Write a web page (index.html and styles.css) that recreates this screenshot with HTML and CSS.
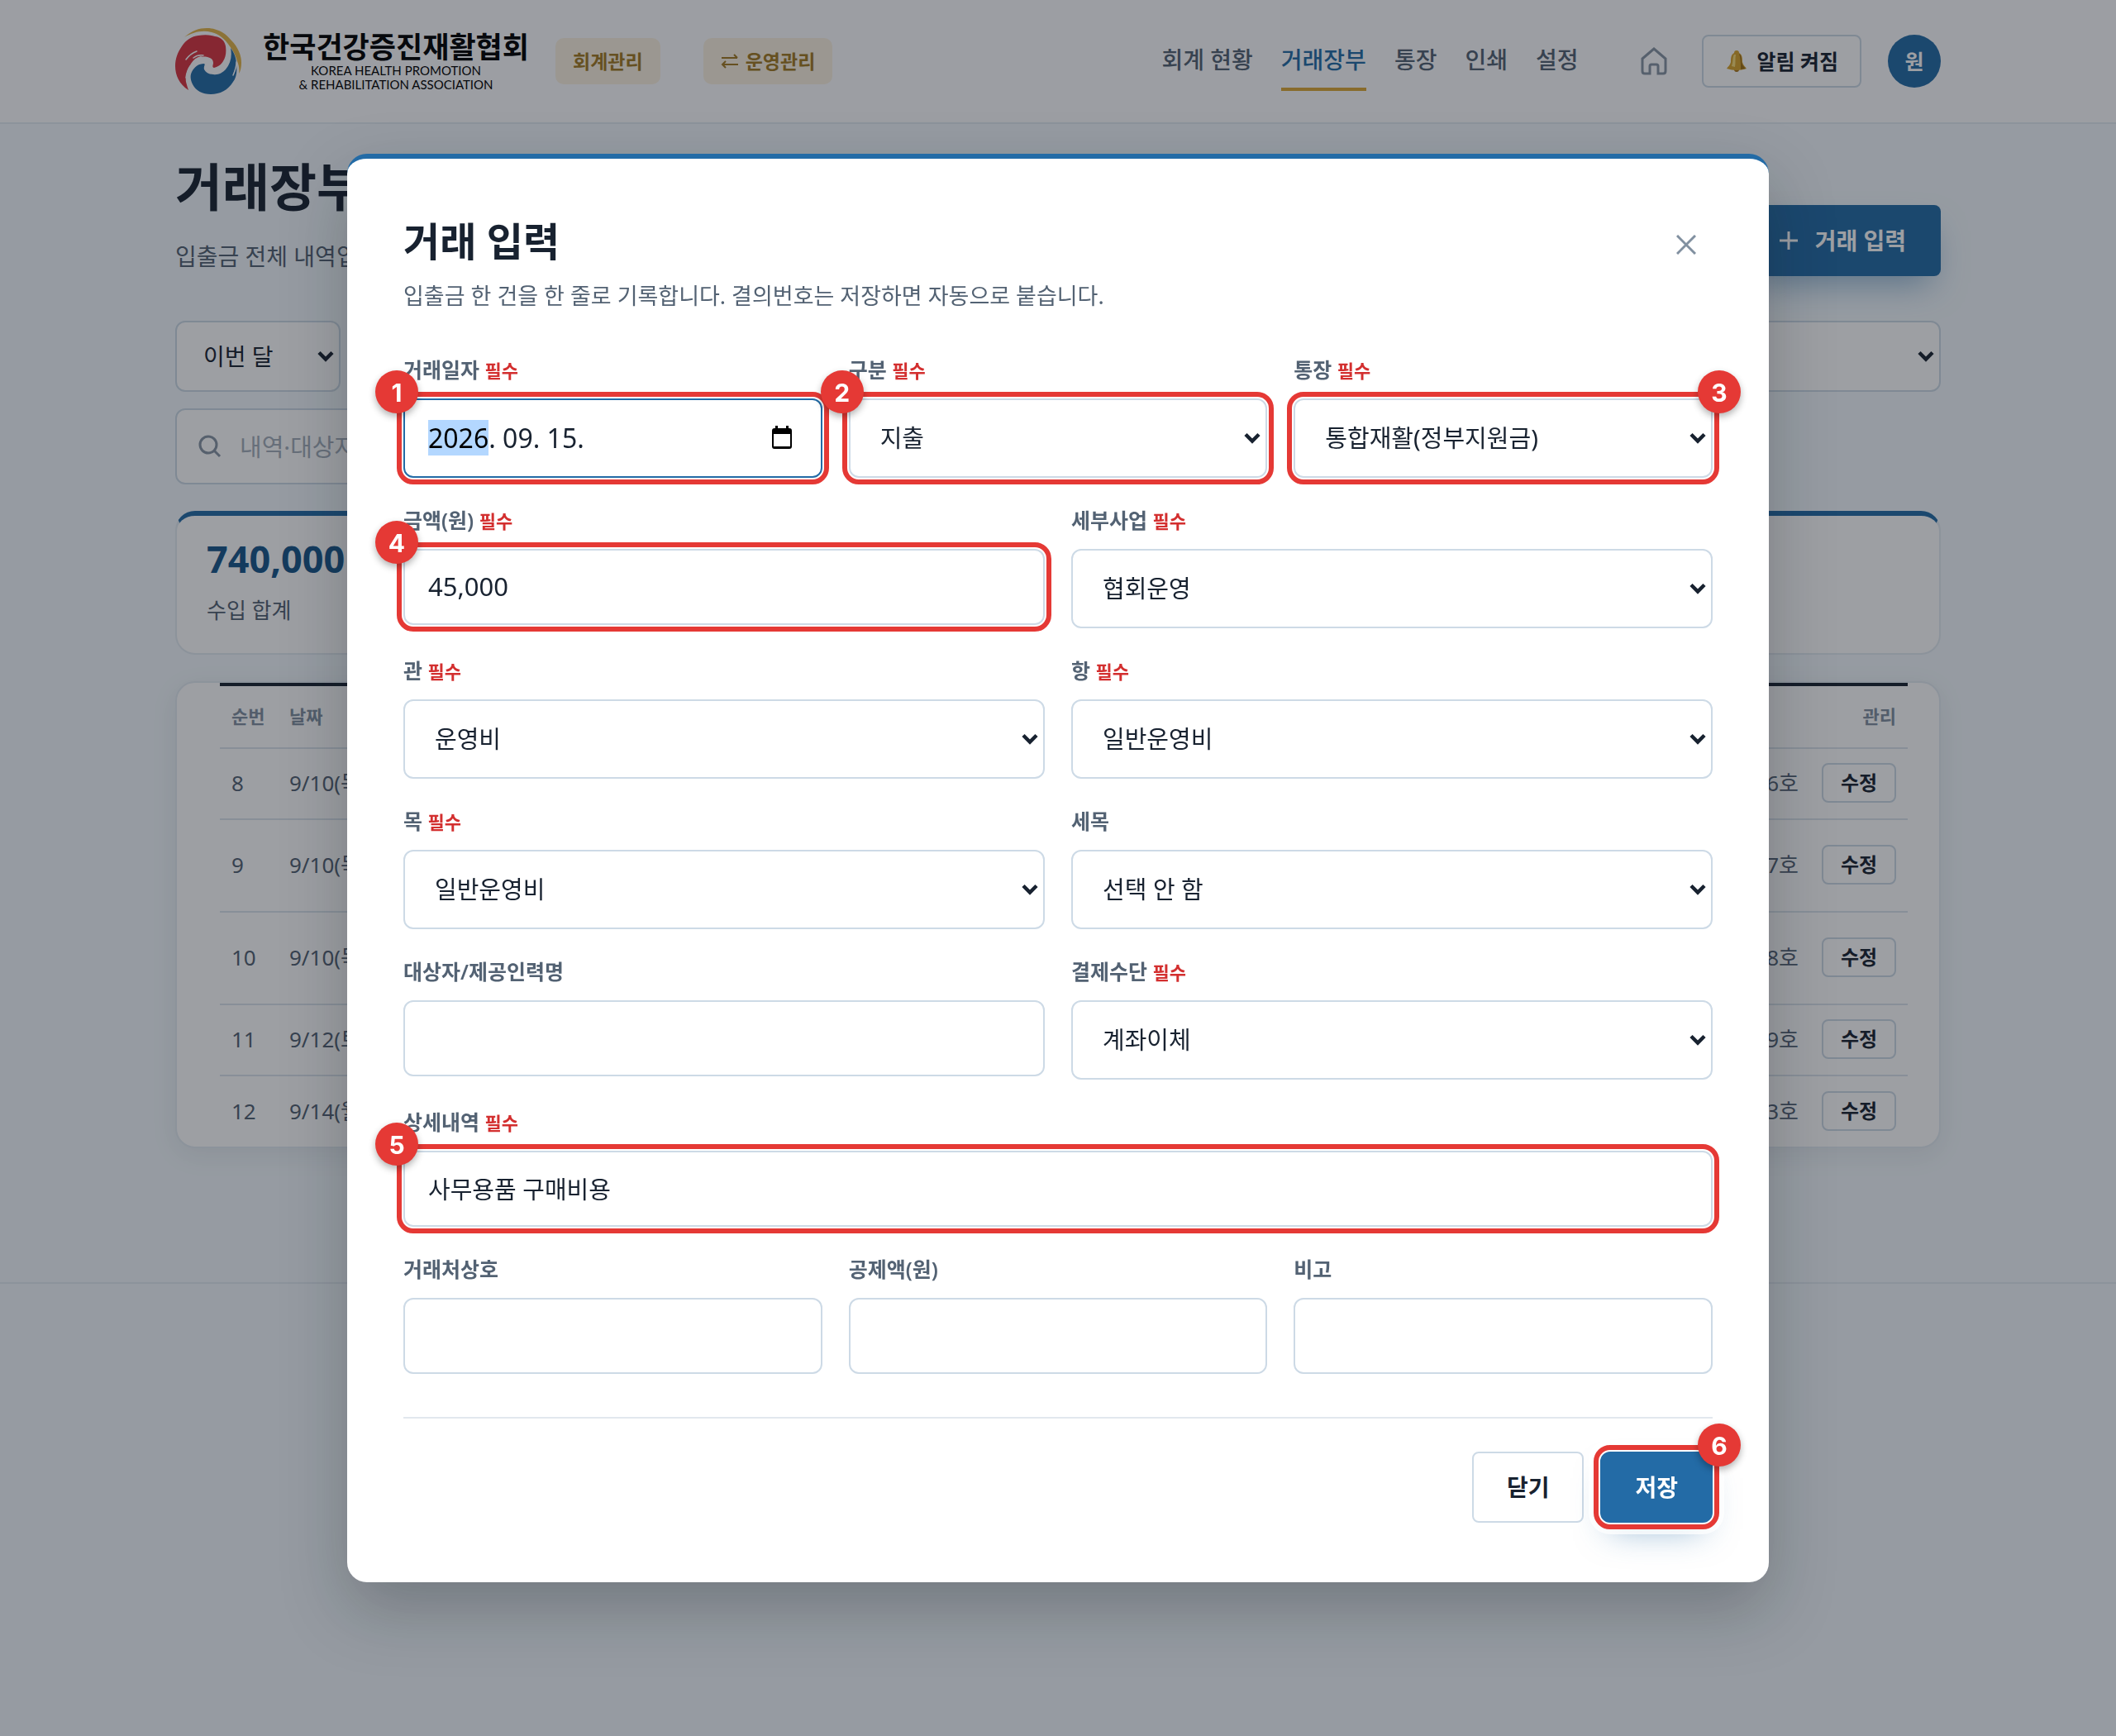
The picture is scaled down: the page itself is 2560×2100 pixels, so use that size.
FILE: index.html
```html
<!DOCTYPE html>
<html lang="ko">
<head>
  <meta charset="UTF-8">
  <title>거래장부 - 한국건강증진재활협회</title>
  <meta name="viewport" content="width=device-width, initial-scale=1.0">
  <link rel="stylesheet" href="styles.css">
</head>
<body>

<!-- Header -->
<header class="site-header">
  <div class="container header-inner">
    <a class="brand" href="#">
      <svg class="brand-mark" viewBox="0 0 80 80" aria-hidden="true">
        <path fill="#e3b448" d="M11 11C20 3 29 0 38 0C51 0 61 6 68 15C76 23 80 33 80 42C80 47 79 52 77 55C78 50 77 45 75 40C73 33 70 27 66 22C60 13 53 7 44 5C32 2 22 5 11 11Z"/>
        <path fill="#d8343f" d="M16 75C5 68 0 57 0 46C0 37 3 29 8 22C13 14 20 10 28 9C35 8 42 8 48 10C56 11 60 16 61 22C62 30 61 35 58 40C55 45 51 47 47 48C44 47 46 45 46 42C46 38 43 36 39 35C36 34 33 35 31 34C26 35 22 38 19 43C14 51 12 58 13 65C14 69 15 72 16 75Z"/>
        <path fill="#236ba6" d="M67 24C72 31 74 37 74 44C75 53 74 60 70 65C64 75 54 80 43 80C33 80 25 76 21 68C18 62 18 57 20 53C23 47 28 43 35 43C37 44 34 46 35 50C37 54 41 56 46 56C52 57 57 54 61 50C67 43 69 34 67 24Z"/>
        <path fill="none" stroke="#fefeff" stroke-width="1.5" stroke-linecap="round" d="M13 38Q18 31 26 28M22 36Q27 32 34 33M13 60Q14 52 18 46M74 41Q74 48 70 57"/>
      </svg>
      <span class="brand-text">
        <strong>한국건강증진재활협회</strong>
        <small>KOREA HEALTH PROMOTION<br>&amp; REHABILITATION ASSOCIATION</small>
      </span>
    </a>
    <a class="chip" href="#">회계관리</a>
    <a class="chip chip-switch" href="#">
      <svg width="22" height="18" viewBox="0 0 22 18" aria-hidden="true"><path d="M1 5H20M16 1L20 5M21 13H2M6 9L2 13L6 17"/></svg>
      운영관리
    </a>
    <nav class="nav">
      <a href="#">회계 현황</a>
      <a href="#" class="active">거래장부</a>
      <a href="#">통장</a>
      <a href="#">인쇄</a>
      <a href="#">설정</a>
    </nav>
    <a class="home" href="#" aria-label="홈">
      <svg width="36" height="36" viewBox="0 0 36 36"><path d="M4 15L18 3L32 15V30Q32 33 29 33H23V24Q23 22 21 22H15Q13 22 13 24V33H7Q4 33 4 30Z"/></svg>
    </a>
    <button type="button" class="alarm">
      <svg width="28" height="28" viewBox="0 0 28 28" aria-hidden="true">
        <circle cx="14" cy="24" r="3" fill="#a8741a"/>
        <path fill="#d9a42c" d="M14 1C16 1 17 2 17 4C21 6 21 11 21 15C22 19 24 20 26 23Q14 27 2 23C4 20 6 19 7 15C7 11 7 6 11 4C11 2 12 1 14 1Z"/>
        <path fill="#9c6d14" d="M17 5C20 7 20 11 20 15C21 19 23 21 25 23L19 24C19 17 19 10 17 5Z"/>
        <path fill="#f8dc78" d="M11 6C9 9 10 15 8 20L12 21C13 15 12 10 13 6Z"/>
      </svg>
      알림 켜짐
    </button>
    <button type="button" class="avatar">원</button>
  </div>
</header>

<!-- Ledger page -->
<main class="container page">
  <div class="page-head">
    <div>
      <h1>거래장부</h1>
      <p>입출금 전체 내역입니다.</p>
    </div>
    <button type="button" class="btn btn-primary btn-add">
      <svg width="24" height="24" viewBox="0 0 24 24" aria-hidden="true"><path d="M12 1V23M1 12H23"/></svg>
      거래 입력
    </button>
  </div>

  <div class="filters">
    <select class="filter-period" aria-label="기간"><option>이번 달</option></select>
    <select class="filter-account" aria-label="통장"><option>전체 통장</option></select>
  </div>
  <div class="search">
    <svg width="28" height="28" viewBox="0 0 28 28" aria-hidden="true"><circle cx="12" cy="12" r="10"/><path d="M19 19L26 26"/></svg>
    <input type="search" placeholder="내역·대상자 검색" aria-label="검색">
  </div>

  <section class="summary">
    <strong>740,000</strong>
    <span>수입 합계</span>
  </section>

  <section class="ledger">
    <table>
      <thead>
        <tr><th class="col-no">순번</th><th>날짜</th><th>결의번호</th><th class="right col-manage">관리</th></tr>
      </thead>
      <tbody>
        <tr><td>8</td><td>9/10(목)</td><td class="right">제2026-6호</td><td class="right"><button type="button">수정</button></td></tr>
        <tr class="tall"><td>9</td><td>9/10(목)</td><td class="right">제2026-7호</td><td class="right"><button type="button">수정</button></td></tr>
        <tr class="tall"><td>10</td><td>9/10(목)</td><td class="right">제2026-8호</td><td class="right"><button type="button">수정</button></td></tr>
        <tr><td>11</td><td>9/12(토)</td><td class="right">제2026-9호</td><td class="right"><button type="button">수정</button></td></tr>
        <tr><td>12</td><td>9/14(월)</td><td class="right">제2026-13호</td><td class="right"><button type="button">수정</button></td></tr>
      </tbody>
    </table>
  </section>
</main>

<footer class="site-footer"></footer>

<!-- Entry dialog -->
<div class="overlay">
  <div class="modal" role="dialog" aria-modal="true" aria-labelledby="modalTitle">
    <div class="modal-head">
      <div>
        <h2 id="modalTitle">거래 입력</h2>
        <p>입출금 한 건을 한 줄로 기록합니다. 결의번호는 저장하면 자동으로 붙습니다.</p>
      </div>
      <button type="button" class="close" aria-label="닫기">
        <svg width="24" height="24" viewBox="0 0 24 24"><path d="M1 1L23 23M23 1L1 23"/></svg>
      </button>
    </div>

    <form class="form" onsubmit="event.preventDefault();">
      <div class="field third">
        <label for="date">거래일자 <em>필수</em></label>
        <div class="control marked date">
          <input id="date" class="number" type="text" value="2026. 09. 15.">
          <svg width="24" height="28" viewBox="0 0 24 28" aria-hidden="true"><path fill="#000" fill-rule="evenodd" d="M4 0H7V3H17V0H20V3H21Q24 3 24 6V25Q24 28 21 28H3Q0 28 0 25V6Q0 3 3 3H4ZM2 10V25H22V10Z"/></svg>
          <span class="badge">1</span>
        </div>
      </div>
      <div class="field third">
        <label for="kind">구분 <em>필수</em></label>
        <div class="control marked">
          <select id="kind"><option>지출</option></select>
          <span class="badge">2</span>
        </div>
      </div>
      <div class="field third">
        <label for="account">통장 <em>필수</em></label>
        <div class="control marked">
          <select id="account"><option>통합재활(정부지원금)</option></select>
          <span class="badge badge-right">3</span>
        </div>
      </div>

      <div class="field half">
        <label for="amount">금액(원) <em>필수</em></label>
        <div class="control marked">
          <input id="amount" class="number" type="text" value="45,000">
          <span class="badge">4</span>
        </div>
      </div>
      <div class="field half">
        <label for="project">세부사업 <em>필수</em></label>
        <select id="project"><option>협회운영</option></select>
      </div>

      <div class="field half">
        <label for="gwan">관 <em>필수</em></label>
        <select id="gwan"><option>운영비</option></select>
      </div>
      <div class="field half">
        <label for="hang">항 <em>필수</em></label>
        <select id="hang"><option>일반운영비</option></select>
      </div>

      <div class="field half">
        <label for="mok">목 <em>필수</em></label>
        <select id="mok"><option>일반운영비</option></select>
      </div>
      <div class="field half">
        <label for="semok">세목</label>
        <select id="semok"><option>선택 안 함</option></select>
      </div>

      <div class="field half">
        <label for="person">대상자/제공인력명</label>
        <input id="person" type="text">
      </div>
      <div class="field half">
        <label for="payment">결제수단 <em>필수</em></label>
        <select id="payment"><option>계좌이체</option></select>
      </div>

      <div class="field full">
        <label for="detail">상세내역 <em>필수</em></label>
        <div class="control marked">
          <input id="detail" type="text" value="사무용품 구매비용">
          <span class="badge">5</span>
        </div>
      </div>

      <div class="field third">
        <label for="vendor">거래처상호</label>
        <input id="vendor" type="text">
      </div>
      <div class="field third">
        <label for="deduction">공제액(원)</label>
        <input id="deduction" type="text">
      </div>
      <div class="field third">
        <label for="note">비고</label>
        <input id="note" type="text">
      </div>

      <div class="form-actions full">
        <button type="button" class="btn btn-line">닫기</button>
        <div class="marked marked-save">
          <button type="submit" class="btn btn-primary">저장</button>
          <span class="badge badge-right">6</span>
        </div>
      </div>
    </form>
  </div>
</div>

<script>
  // start with the year part selected
  const dateInput = document.getElementById('date');
  dateInput.focus();
  dateInput.setSelectionRange(0, 4);
</script>

</body>
</html>
```
FILE: styles.css
```css
* {
  box-sizing: border-box;
}

body {
  margin: 0;
  min-height: 100vh;
  background: #f3f9fd;
  color: #182230;
  font-family: "Noto Sans", "Noto Sans CJK KR", sans-serif;
  font-size: 28px;
  line-height: 44px;
}

button,
input,
select {
  font: inherit;
  color: inherit;
}

button {
  cursor: pointer;
}

a {
  color: inherit;
  text-decoration: none;
}

svg {
  flex: none;
}

h1,
h2,
p {
  margin: 0;
}

.container {
  max-width: 2136px;
  margin: 0 auto;
}

/* Header */
.site-header {
  background: #fefeff;
  border-bottom: 2px solid #e2eaf1;
}

.header-inner {
  display: flex;
  align-items: center;
  height: 148px;
}

.brand {
  display: flex;
  align-items: center;
  gap: 26px;
  margin-right: 32px;
}

.brand-mark {
  width: 80px;
  height: 80px;
}

.brand-text {
  display: flex;
  flex-direction: column;
  align-items: center;
  color: #000;
}

.brand-text strong {
  font-size: 35px;
  line-height: 40px;
}

.brand-text small {
  font-family: Lato, sans-serif;
  font-size: 15px;
  line-height: 17px;
  text-align: center;
}

.chip {
  display: flex;
  align-items: center;
  gap: 8px;
  height: 56px;
  padding: 0 21px;
  border-radius: 10px;
  background: #fbf2e0;
  color: #a27a22;
  font-size: 23px;
  font-weight: 700;
}

.chip-switch {
  margin-left: 52px;
}

.chip svg {
  fill: none;
  stroke: currentColor;
  stroke-width: 2;
}

.nav {
  display: flex;
  gap: 34px;
  margin-left: auto;
  color: #536273;
  font-weight: 500;
}

.nav a {
  padding: 12px 0;
  border-bottom: 4px solid transparent;
}

.nav .active {
  color: #236ba6;
  border-color: #dba735;
}

.home {
  display: flex;
  margin: 0 40px 0 74px;
}

.home svg {
  fill: none;
  stroke: #8794a3;
  stroke-width: 3;
}

.alarm {
  display: flex;
  align-items: center;
  gap: 10px;
  height: 64px;
  padding: 0 26px;
  border: 2px solid #cddae6;
  border-radius: 8px;
  background: #fff;
  font-size: 25px;
  font-weight: 700;
}

.avatar {
  width: 64px;
  height: 64px;
  margin-left: 32px;
  padding: 0;
  border: 0;
  border-radius: 50%;
  background: #236ba6;
  color: #fff;
  font-size: 25px;
  font-weight: 700;
}

/* Ledger page */
.page-head {
  display: flex;
  justify-content: space-between;
  align-items: flex-end;
  padding: 36px 0 54px;
}

.page-head h1 {
  font-size: 62px;
  line-height: 80px;
  margin-bottom: 20px;
}

.page-head p {
  color: #536273;
  line-height: 48px;
}

.btn {
  height: 86px;
  padding: 0 42px;
  border-radius: 8px;
  font-size: 28px;
  font-weight: 700;
}

.btn-primary {
  border: 0;
  background: #236ba6;
  color: #fff;
  box-shadow: 0 20px 40px -12px rgba(35, 107, 166, 0.5);
}

.btn-line {
  padding: 0 40px;
  border: 2px solid #cddae6;
  background: #fff;
}

.btn-add {
  display: flex;
  align-items: center;
  gap: 20px;
}

.btn-add svg {
  stroke: #fff;
  stroke-width: 3;
}

.filters {
  display: flex;
  gap: 20px;
}

input,
select {
  width: 100%;
  border: 2px solid #cddae6;
  border-radius: 12px;
  background-color: #fff;
  font-size: 29px;
  outline: 0;
}

input {
  height: 92px;
  padding: 0 28px 2px;
}

select {
  appearance: none;
  height: 96px;
  padding: 0 36px;
  background-image: url('data:image/svg+xml,<svg xmlns="http://www.w3.org/2000/svg" width="20" height="14" viewBox="0 0 20 14"><path d="M2 2.5L10 10.5L18 2.5" fill="none" stroke="%23182230" stroke-width="4.5"/></svg>');
  background-repeat: no-repeat;
  background-position: right 6px center;
}

.filters select {
  height: 86px;
  padding: 0 32px;
  font-size: 28px;
}

.filters .filter-period {
  width: 200px;
}

.filters .filter-account {
  flex: 1;
}

.search {
  display: flex;
  align-items: center;
  gap: 22px;
  width: 50%;
  height: 92px;
  margin-top: 20px;
  padding: 0 26px;
  border: 2px solid #cddae6;
  border-radius: 12px;
  background: #fff;
}

.search svg {
  fill: none;
  stroke: #8794a3;
  stroke-width: 3;
}

.search input {
  height: 80px;
  padding: 0;
  border: 0;
}

.search input::placeholder {
  color: #a3adb9;
}

.summary {
  display: flex;
  flex-direction: column;
  height: 174px;
  margin: 32px 0;
  padding: 26px 36px;
  border: 2px solid #e2eaf1;
  border-top: 6px solid #236ba6;
  border-radius: 24px;
  background: #fff;
}

.summary strong {
  color: #17568a;
  font-size: 45px;
  line-height: 52px;
}

.summary span {
  margin-top: 14px;
  color: #536273;
  font-size: 26px;
}

.ledger {
  padding: 0 38px 0 52px;
  border: 2px solid #e2eaf1;
  border-radius: 24px;
  background: #fff;
  box-shadow: 0 8px 32px rgba(24, 34, 48, 0.08);
}

.ledger table {
  width: 100%;
  border-collapse: collapse;
  border-top: 4px solid #182230;
}

.ledger th,
.ledger td {
  height: 86px;
  padding: 0 14px 2px;
  border-bottom: 2px solid #dbe4ec;
  color: #536273;
  font-size: 26px;
  text-align: left;
}

.ledger th {
  height: 77px;
  color: #8190a0;
  font-size: 22px;
}

.ledger .tall td {
  height: 112px;
}

.ledger tr:last-child td {
  border-bottom: 0;
}

.ledger thead tr:last-child th {
  border-bottom: 2px solid #dbe4ec;
}

.ledger .right {
  text-align: right;
}

.ledger .col-no {
  width: 70px;
  white-space: nowrap;
}

.ledger .col-manage {
  width: 118px;
}

.ledger button {
  height: 48px;
  width: 90px;
  padding: 0;
  border: 2px solid #cddae6;
  border-radius: 8px;
  background: #fff;
  color: #182230;
  font-size: 24px;
  font-weight: 700;
}

.site-footer {
  margin-top: 162px;
  border-top: 2px solid #e2eaf1;
}

/* Entry dialog */
.overlay {
  position: fixed;
  inset: 0;
  display: flex;
  align-items: center;
  justify-content: center;
  background: rgba(16, 22, 32, 0.41);
}

.modal {
  width: 100%;
  max-width: 1720px;
  padding: 70px 68px 72px;
  border-top: 6px solid #236ba6;
  border-radius: 24px;
  background: #fff;
  box-shadow: 0 32px 80px rgba(16, 22, 32, 0.26);
}

.modal-head {
  display: flex;
  justify-content: space-between;
  align-items: flex-start;
  margin-bottom: 48px;
}

.modal-head h2 {
  font-size: 48px;
  line-height: 60px;
  margin-bottom: 14px;
}

.modal-head p {
  color: #536273;
  font-size: 27px;
}

.close {
  display: flex;
  align-items: center;
  justify-content: center;
  width: 64px;
  height: 68px;
  padding: 0;
  border: 0;
  background: none;
}

.close svg {
  stroke: #8190a0;
  stroke-width: 3;
}

.form {
  display: grid;
  grid-template-columns: repeat(6, 1fr);
  column-gap: 32px;
  row-gap: 32px;
}

.third {
  grid-column: span 2;
}

.half {
  grid-column: span 3;
}

.full {
  grid-column: 1 / -1;
}

.field label {
  display: block;
  height: 38px;
  margin-bottom: 16px;
  color: #536273;
  font-size: 25px;
  line-height: 38px;
  font-weight: 600;
}

.field em {
  color: #d32f2f;
  font-size: 22px;
  font-style: normal;
  font-weight: 700;
}

.number {
  font-size: 31px;
}

.date input {
  display: block;
  height: 96px;
  border-color: #236ba6;
  font-size: 32px;
}

.date svg {
  position: absolute;
  top: 33px;
  right: 37px;
}

.date input::selection {
  background: #b3d7ff;
  color: #000;
}

/* Numbered guide marks */
.marked {
  position: relative;
}

.marked::after {
  content: "";
  position: absolute;
  inset: -8px;
  border: 6px solid #e53935;
  border-radius: 20px;
  pointer-events: none;
}

.marked-save::after {
  box-shadow: 0 0 0 6px rgba(255, 255, 255, 0.75), inset 0 0 0 2px #fff;
}

.badge {
  position: absolute;
  z-index: 1;
  top: -34px;
  left: -34px;
  width: 52px;
  height: 52px;
  border-radius: 50%;
  background: #e53935;
  box-shadow: 0 4px 8px rgba(0, 0, 0, 0.3);
  color: #fff;
  font-family: Inter, sans-serif;
  font-size: 30px;
  font-weight: 700;
  line-height: 54px;
  text-align: center;
}

.badge-right {
  left: auto;
  right: -34px;
}

.form-actions {
  display: flex;
  justify-content: flex-end;
  gap: 20px;
  margin-top: 20px;
  padding-top: 40px;
  border-top: 2px solid #e2e8ee;
}
```
